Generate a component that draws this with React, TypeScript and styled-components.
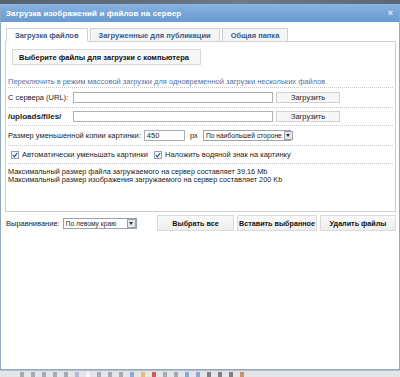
import React from "react";
import styled, { createGlobalStyle } from "styled-components";

const GlobalStyle = createGlobalStyle`
  html, body {
    margin: 0;
    padding: 0;
    background: #d6dbe0;
  }
  * {
    box-sizing: border-box;
  }
`;

const Screen = styled.div`
  width: 400px;
  height: 377px;
  display: flex;
  flex-direction: column;
  overflow: hidden;
  font-family: "Liberation Sans", Arial, sans-serif;
  font-size: 7.5px;
  color: #222;
`;

const TopStrip = styled.div`
  height: 4px;
  background: linear-gradient(90deg, #56626e, #6c7986 60%, #5b6875);
`;

const Middle = styled.div`
  flex: 1;
  display: flex;
  min-height: 0;
`;

const SideStrip = styled.div<{ $w: number; $bg: string }>`
  width: ${({ $w }) => $w}px;
  background: ${({ $bg }) => $bg};
`;

const Dialog = styled.div`
  flex: 1;
  display: flex;
  flex-direction: column;
  background: #fff;
  border: 1px solid #8fa9c6;
  border-top: none;
`;

const TitleBar = styled.div`
  height: 18px;
  display: flex;
  align-items: center;
  justify-content: space-between;
  padding: 0 6px 0 5px;
  background: linear-gradient(180deg, #8bb4e2 0%, #77a5d8 50%, #6b9bd1 100%);
  color: #fff;
  font-size: 8px;
  font-weight: bold;
  letter-spacing: 0.1px;
`;

const Close = styled.span`
  color: #e4ecf6;
  font-size: 9px;
  font-weight: bold;
`;

const Body = styled.div`
  padding: 6px 3px 0 4px;
  display: flex;
  flex-direction: column;
`;

const Tabs = styled.div`
  display: flex;
  gap: 2px;
  padding-left: 1px;
  height: 14px;
`;

const Tab = styled.div<{ $active?: boolean }>`
  height: 14px;
  padding: 0 8px;
  display: flex;
  align-items: center;
  border: 1px solid #cdd2d8;
  border-bottom: ${({ $active }) => ($active ? "1px solid #fff" : "1px solid #cdd2d8")};
  background: ${({ $active }) => ($active ? "#fff" : "#f4f5f6")};
  color: #3d5a8a;
  font-weight: bold;
  font-size: 7.5px;
  white-space: nowrap;
  position: relative;
  z-index: 1;
`;

const Panel = styled.div`
  margin-top: -1px;
  height: 171px;
  border: 1px solid #c9ced4;
  padding: 7px 2px 0 2px;
  display: flex;
  flex-direction: column;
`;

const BigButton = styled.div`
  margin-left: 4px;
  width: 189px;
  height: 16px;
  display: flex;
  align-items: center;
  padding-left: 6px;
  border: 1px solid #d8d8d8;
  background: #f7f7f7;
  font-weight: bold;
  color: #111;
  white-space: nowrap;
`;

const Row = styled.div<{ $pt: number; $h: number }>`
  display: flex;
  align-items: center;
  gap: 3px;
  padding-top: ${({ $pt }) => $pt}px;
  height: ${({ $h }) => $h}px;
  border-bottom: 1px dotted #c8c8c8;
  flex-shrink: 0;
  white-space: nowrap;
`;

const LinkText = styled.span`
  color: #4f73a8;
  line-height: 10px;
`;

const Label = styled.span<{ $w?: number; $bold?: boolean }>`
  width: ${({ $w }) => ($w ? `${$w}px` : "auto")};
  font-weight: ${({ $bold }) => ($bold ? "bold" : "normal")};
  font-size: ${({ $bold }) => ($bold ? "8px" : "7.5px")};
  white-space: nowrap;
  flex-shrink: 0;
`;

const Input = styled.div<{ $w: number }>`
  width: ${({ $w }) => $w}px;
  height: 11px;
  border: 1px solid #a9b0b8;
  background: #fff;
  padding-left: 2px;
  display: flex;
  align-items: center;
  flex-shrink: 0;
`;

const SmallButton = styled.div`
  width: 64px;
  height: 11px;
  border: 1px solid #d0d0d0;
  background: #f7f7f7;
  display: flex;
  align-items: center;
  justify-content: center;
  flex-shrink: 0;
`;

const Select = styled.div<{ $w: number }>`
  width: ${({ $w }) => $w}px;
  height: 11px;
  border: 1px solid #9aa3ad;
  background: #fff;
  display: flex;
  align-items: center;
  gap: 2px;
  padding-left: 2px;
  flex-shrink: 0;
  white-space: nowrap;
  font-size: 6.7px;
`;

const SelectText = styled.span`
  flex: 1;
`;

const Arrow = styled.div`
  width: 9px;
  height: 9px;
  flex-shrink: 0;
  border: 1px solid #9aa3ad;
  background: #e6e8ea;
  display: flex;
  align-items: center;
  justify-content: center;
  &::after {
    content: "";
    border-left: 2.5px solid transparent;
    border-right: 2.5px solid transparent;
    border-top: 3px solid #333;
  }
`;

const Check = styled.div`
  width: 8px;
  height: 8px;
  border: 1px solid #8ea2bd;
  background: #f4f7fb;
  display: flex;
  align-items: center;
  justify-content: center;
  flex-shrink: 0;
`;

const CheckItem = styled.div<{ $w?: number; $pl?: number }>`
  display: flex;
  align-items: center;
  gap: 3px;
  width: ${({ $w }) => ($w ? `${$w}px` : "auto")};
  padding-left: ${({ $pl }) => $pl ?? 0}px;
`;

const Info = styled.div`
  padding-top: 4px;
  line-height: 8px;
  padding-left: 0;
  font-size: 7.3px;
`;

const BottomRow = styled.div`
  display: flex;
  align-items: center;
  margin-top: 3px;
  height: 16px;
  padding-left: 1px;
  white-space: nowrap;
`;

const Align = styled.div`
  display: flex;
  align-items: center;
  gap: 3px;
  width: 148px;
`;

const ActionButton = styled.div<{ $w: number }>`
  width: ${({ $w }) => $w}px;
  height: 16px;
  margin-left: 3px;
  border: 1px solid #dadada;
  background: linear-gradient(180deg, #fafafa, #eeeeee);
  display: flex;
  align-items: center;
  justify-content: center;
  font-weight: bold;
  font-size: 7.2px;
  color: #111;
  flex-shrink: 0;
  white-space: nowrap;
`;

const Spacer = styled.div`
  flex: 1;
`;

const Toolbar = styled.div`
  height: 7px;
  background: #e3e5e8;
  border-top: 1px solid #b8bfc7;
  display: flex;
  align-items: center;
  gap: 7px;
  padding-left: 20px;
`;

const Glyph = styled.div<{ $c: string; $w?: number }>`
  width: ${({ $w }) => $w ?? 4}px;
  height: 5px;
  background: ${({ $c }) => $c};
  opacity: 0.7;
`;

const CheckMark = () => (
  <svg width="6" height="6" viewBox="0 0 6 6">
    <path d="M0.8 3.2 L2.4 4.8 L5.2 1" stroke="#2a4a80" strokeWidth="1.1" fill="none" />
  </svg>
);

const toolbarGlyphs = [
  "#8a939c", "#8a939c", "#8a939c", "#8a939c", "#8a939c", "#9aa8c8", "#fff",
  "#8a939c", "#8a939c", "#8a939c", "#6b8fc8", "#e0b040", "#c02020", "#8a939c",
  "#8a939c", "#6b8fc8", "#6b8fc8", "#555", "#555", "#555", "#c07030",
];

const App = () => {
  return (
    <>
      <GlobalStyle />
      <Screen>
        <TopStrip />
        <Middle>
          <SideStrip $w={3} $bg="#bfc6ce" />
          <Dialog>
            <TitleBar>
              <span>Загрузка изображений и файлов на сервер</span>
              <Close>×</Close>
            </TitleBar>
            <Body>
              <Tabs>
                <Tab $active>Загрузка файлов</Tab>
                <Tab>Загруженные для публикации</Tab>
                <Tab>Общая папка</Tab>
              </Tabs>
              <Panel>
                <BigButton>Выберите файлы для загрузки с компьютера</BigButton>
                <Row $pt={11} $h={23}>
                  <LinkText>
                    Переключить в режим массовой загрузки для одновременной загрузки нескольких файлов
                  </LinkText>
                </Row>
                <Row $pt={0} $h={20}>
                  <Label $w={62}>С сервера (URL):</Label>
                  <Input $w={200} />
                  <SmallButton>Загрузить</SmallButton>
                </Row>
                <Row $pt={0} $h={18}>
                  <Label $w={62} $bold>
                    /uploads/files/
                  </Label>
                  <Input $w={200} />
                  <SmallButton>Загрузить</SmallButton>
                </Row>
                <Row $pt={0} $h={20}>
                  <Label>Размер уменьшенной копии картинки:</Label>
                  <Input $w={41}>450</Input>
                  <Label>&nbsp;px&nbsp;</Label>
                  <Select $w={88}>
                    <SelectText>По наибольшей стороне</SelectText>
                    <Arrow />
                  </Select>
                </Row>
                <Row $pt={0} $h={18}>
                  <CheckItem $w={143} $pl={3}>
                    <Check>
                      <CheckMark />
                    </Check>
                    Автоматически уменьшать картинки
                  </CheckItem>
                  <CheckItem>
                    <Check>
                      <CheckMark />
                    </Check>
                    Наложить водяной знак на картинку
                  </CheckItem>
                </Row>
                <Info>
                  Максимальный размер файла загружаемого на сервер составляет 39,16 Mb
                  <br />
                  Максимальный размер изображения загружаемого на сервер составляет 200 Kb
                </Info>
              </Panel>
              <BottomRow>
                <Align>
                  <span>Выравнивание:</span>
                  <Select $w={74}>
                    <SelectText>По левому краю</SelectText>
                    <Arrow />
                  </Select>
                </Align>
                <ActionButton $w={77}>Выбрать все</ActionButton>
                <ActionButton $w={80}>Вставить выбранное</ActionButton>
                <ActionButton $w={76}>Удалить файлы</ActionButton>
              </BottomRow>
            </Body>
            <Spacer />
          </Dialog>
          <SideStrip $w={4} $bg="#dfe3e7" />
        </Middle>
        <Toolbar>
          {toolbarGlyphs.map((c, i) => (
            <Glyph key={i} $c={c} />
          ))}
        </Toolbar>
      </Screen>
    </>
  );
};

export default App;
